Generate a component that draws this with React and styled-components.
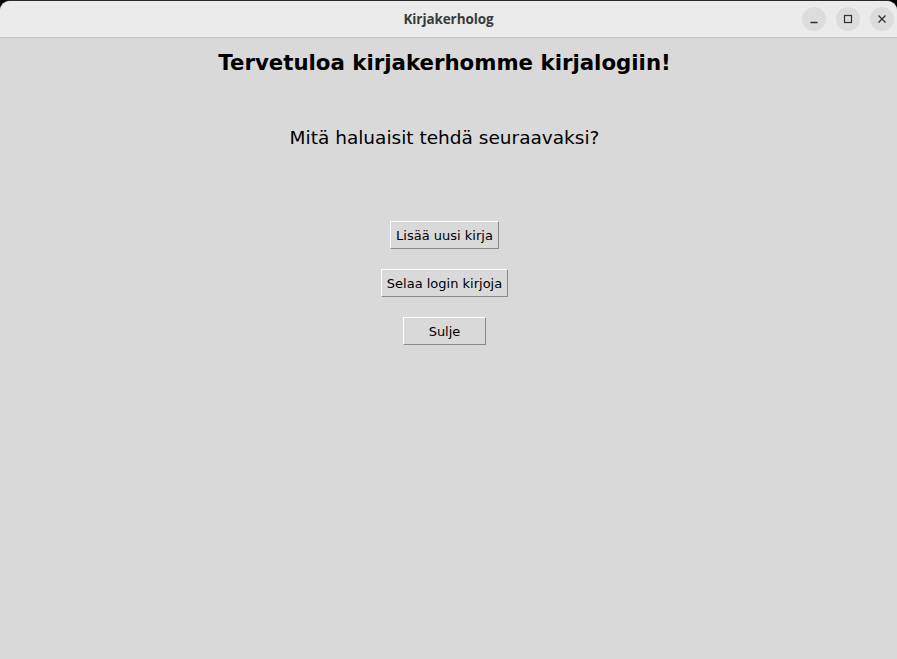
import React from "react";
import styled, { createGlobalStyle } from "styled-components";

const Global = createGlobalStyle`
  html, body { margin: 0; padding: 0; background: #000; }
  body { width: 897px; height: 659px; overflow: hidden; }
  #root { width: 897px; height: 659px; }
`;

const Window = styled.div`
  width: 897px;
  height: 659px;
  display: flex;
  flex-direction: column;
  background: #d9d9d9;
  border-radius: 10px 10px 0 0;
  overflow: hidden;
  box-sizing: border-box;
  border-top: 1px solid #2a2a2a;
`;

const TitleBar = styled.div`
  height: 36px;
  flex: none;
  background: #ebebeb;
  border-bottom: 1px solid #c4c4c4;
  display: grid;
  grid-template-columns: 1fr auto 1fr;
  align-items: center;
`;

const Title = styled.div`
  grid-column: 2;
  font-family: "Open Sans", "DejaVu Sans", sans-serif;
  font-weight: 700;
  font-size: 13.5px;
  color: #3a3a3a;
  letter-spacing: -0.1px;
`;

const Controls = styled.div`
  grid-column: 3;
  justify-self: end;
  display: flex;
  gap: 10px;
  padding-right: 3px;
`;

const Ctl = styled.div`
  width: 24px;
  height: 24px;
  border-radius: 50%;
  background: #dcdcdc;
  display: flex;
  align-items: center;
  justify-content: center;
`;

const Content = styled.div`
  flex: 1;
  display: flex;
  flex-direction: column;
  align-items: center;
  padding-right: 8px;
  font-family: "DejaVu Sans", sans-serif;
  color: #000;
`;

const Heading = styled.h1`
  margin: 12px 0 0;
  font-size: 21.3px;
  font-weight: 700;
  line-height: 25px;
`;

const Question = styled.p`
  margin: 51px 0 0;
  font-size: 18.5px;
  line-height: 24px;
`;

const Buttons = styled.div`
  margin-top: 71px;
  display: flex;
  flex-direction: column;
  align-items: center;
  gap: 20px;
`;

const Button = styled.button`
  box-sizing: border-box;
  height: 28px;
  min-width: ${(p) => p.$min || 0}px;
  padding: 0 5px;
  background: #d9d9d9;
  font-family: "DejaVu Sans", sans-serif;
  font-size: 13px;
  color: #000;
  border: 1px solid;
  border-color: #ffffff #8a8a8a #8a8a8a #ffffff;
  border-radius: 0;
  cursor: pointer;
`;

export default function App() {
  return (
    <>
      <Global />
      <Window>
        <TitleBar>
          <Title>Kirjakerholog</Title>
          <Controls>
            <Ctl>
              <svg width="10" height="10" viewBox="0 0 10 10">
                <path d="M1.5 8.5h7" stroke="#2e2e2e" strokeWidth="1.3" />
              </svg>
            </Ctl>
            <Ctl>
              <svg width="10" height="10" viewBox="0 0 10 10">
                <rect x="1.5" y="1.5" width="7" height="7" fill="none" stroke="#2e2e2e" strokeWidth="1.2" />
              </svg>
            </Ctl>
            <Ctl>
              <svg width="10" height="10" viewBox="0 0 10 10">
                <path d="M1.5 1.5l7 7M8.5 1.5l-7 7" stroke="#2e2e2e" strokeWidth="1.3" />
              </svg>
            </Ctl>
          </Controls>
        </TitleBar>
        <Content>
          <Heading>Tervetuloa kirjakerhomme kirjalogiin!</Heading>
          <Question>Mitä haluaisit tehdä seuraavaksi?</Question>
          <Buttons>
            <Button>Lisää uusi kirja</Button>
            <Button>Selaa login kirjoja</Button>
            <Button $min={83}>Sulje</Button>
          </Buttons>
        </Content>
      </Window>
    </>
  );
}
